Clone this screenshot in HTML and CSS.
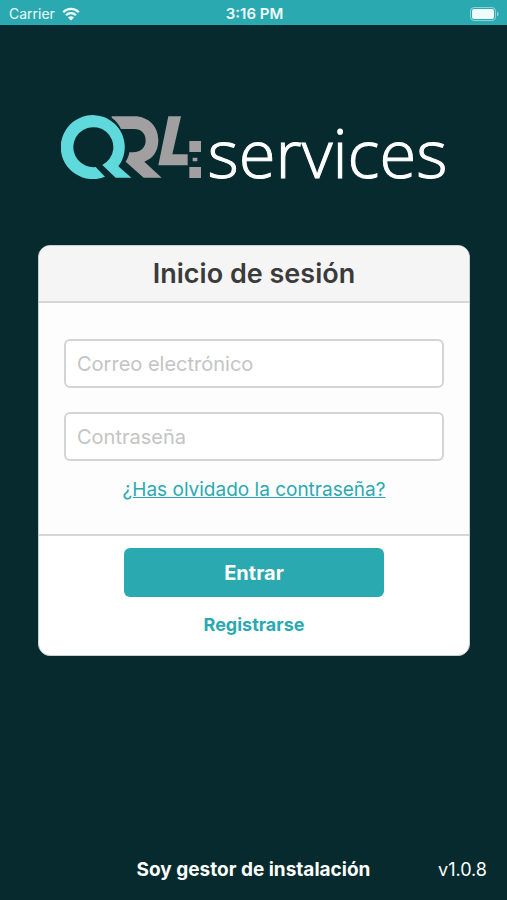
FILE: index.html
```html
<!DOCTYPE html>
<html lang="es">
<head>
<meta charset="utf-8">
<meta name="viewport" content="width=device-width, initial-scale=1">
<title>QR4 services</title>
<link rel="stylesheet" href="styles.css">
</head>
<body>
<header class="status">
  <div class="carrier">
    <span>Carrier</span>
    <svg class="wifi" viewBox="0 0 18 14" aria-hidden="true">
      <path d="M1.2 5.2a11 11 0 0 1 15.6 0M4 8.3a7 7 0 0 1 10 0" fill="none" stroke="currentColor" stroke-width="2.3"/>
      <path d="M9 13.6 5.9 10.5a4.4 4.4 0 0 1 6.2 0z" fill="currentColor"/>
    </svg>
  </div>
  <time class="clock">3:16 PM</time>
  <svg class="battery" viewBox="0 0 30 14" aria-hidden="true">
    <rect x="0.5" y="0.5" width="25" height="13" rx="3.5" fill="none" stroke="currentColor" opacity="0.5"/>
    <rect x="2" y="2" width="22" height="10" rx="2" fill="currentColor"/>
    <path d="M27 4.5a2.7 2.7 0 0 1 0 5z" fill="currentColor" opacity="0.5"/>
  </svg>
</header>
<main class="screen">
  <h1 class="brand">
    <svg class="mark" viewBox="36 30 420 192" role="img" aria-label="QR4">
      <path fill="#5fd9dc" d="M168 215A96 96 0 1 1 208 184L247 218H200L160 180A60 60 0 1 0 140 186Z"/>
      <path fill="#a19f9f" d="M188 34H255C300 34 328 66 328 106C328 140 310 162 286 170L338 218H284L230 170C236 160 240 151 241 142H252C277 142 290 126 290 106C290 86 277 72 255 72H216C210 58 200 46 188 38Z"/>
      <path fill="#a19f9f" d="M358 34H396L370 148H416V181H328ZM421 108H456V141H421ZM431 158H445V169H431ZM421 186H456V219H421Z"/>
    </svg>
    <span class="brand-name">services</span>
  </h1>
  <form class="card">
    <h2 class="card-title">Inicio de sesión</h2>
    <div class="fields">
      <input class="field" type="email" placeholder="Correo electrónico" aria-label="Correo electrónico">
      <input class="field" type="password" placeholder="Contraseña" aria-label="Contraseña">
      <a class="forgot" href="#recuperar">¿Has olvidado la contraseña?</a>
    </div>
    <div class="actions">
      <button class="submit" type="submit">Entrar</button>
      <a class="register" href="#registro">Registrarse</a>
    </div>
  </form>
</main>
<footer class="foot">
  <a class="manager" href="#gestor">Soy gestor de instalación</a>
  <span class="version">v1.0.8</span>
</footer>
</body>
</html>
```
FILE: styles.css
```css
* {
  box-sizing: border-box;
}

body {
  margin: 0;
  min-height: 100vh;
  display: flex;
  flex-direction: column;
  background: #062a2e;
  color: #fff;
  font-family: Inter, "Liberation Sans", sans-serif;
}

.status {
  display: grid;
  grid-template-columns: 1fr auto 1fr;
  align-items: center;
  height: 25px;
  padding: 2px 7px 0 9px;
  background: #2ba9b1;
  color: #effcfc;
  font-size: 14px;
}

.carrier {
  display: flex;
  align-items: center;
  gap: 7px;
}

.wifi {
  width: 18px;
  height: 14px;
}

.clock {
  font-size: 15px;
  font-weight: 600;
}

.battery {
  justify-self: end;
  width: 30px;
  height: 14px;
}

.screen {
  flex: 1;
  padding: 0 37px 0 38px;
}

.brand {
  display: flex;
  justify-content: center;
  gap: 7px;
  height: 64px;
  margin: 90px 0 66px;
}

.mark {
  width: 140px;
  height: 64px;
}

.brand-name {
  font-family: "Open Sans", "Noto Sans", sans-serif;
  font-size: 67px;
  line-height: 74px;
  font-weight: 300;
  -webkit-text-stroke: 1px currentColor;
}

.card {
  overflow: hidden;
  border: 1px solid #c9cfcf;
  border-radius: 12px;
  background: #fff;
}

.card-title {
  margin: 0;
  padding: 11px 12px;
  border-bottom: 2px solid #d6d6d6;
  background: #f5f5f5;
  color: #3b3b3b;
  font-size: 27px;
  line-height: 33px;
  font-weight: 600;
  text-align: center;
}

.fields {
  display: flex;
  flex-direction: column;
  gap: 24px;
  padding: 36px 25px 32px;
  border-bottom: 2px solid #d6d6d6;
  background: #fdfdfd;
}

.field {
  width: 100%;
  height: 49px;
  padding: 0 11px;
  border: 2px solid #d4d4d4;
  border-radius: 6px;
  background: #fff;
  color: #3b3b3b;
  font: inherit;
  font-size: 20px;
}

.field::placeholder {
  color: #c4c4c4;
}

.forgot {
  align-self: center;
  margin-top: -7px;
  color: #2ba9b1;
  font-size: 19px;
  line-height: 24px;
}

.actions {
  display: flex;
  flex-direction: column;
  align-items: center;
  gap: 16px;
  padding: 12px 24px 18px;
}

.submit {
  width: 260px;
  height: 49px;
  border: 0;
  border-radius: 6px;
  background: #2ba9b1;
  color: #fff;
  font: inherit;
  font-size: 20px;
  font-weight: 700;
}

.register {
  color: #2ba9b1;
  font-size: 18px;
  line-height: 24px;
  font-weight: 700;
  text-decoration: none;
}

.foot {
  display: grid;
  grid-template-columns: 1fr auto 1fr;
  align-items: center;
  padding: 0 20px 18px;
  line-height: 24px;
}

.manager {
  grid-column: 2;
  color: #fff;
  font-size: 19px;
  font-weight: 700;
  text-decoration: none;
}

.version {
  justify-self: end;
  font-size: 18px;
}
```
